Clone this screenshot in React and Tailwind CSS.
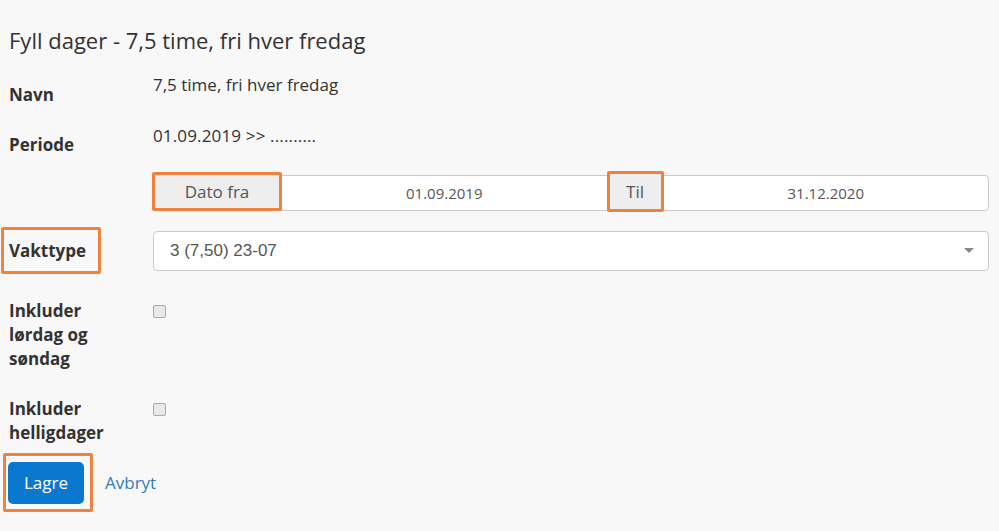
export default function App() {
  const orange = "border-[#f0823f]";
  return (
    <div className="min-h-[531px] w-[999px] bg-[#f8f8f8] pl-[9px] pr-[10px] text-[#333] [font-family:'Open_Sans',sans-serif]">
      <h1 className="pt-[25px] text-[22px] leading-[30px] font-normal text-[#333]">
        Fyll dager - 7,5 time, fri hver fredag
      </h1>

      <div className="mt-[18px] flex">
        <label className="w-[144px] pt-[10px] text-[17px] leading-[24px] font-bold">Navn</label>
        <div className="text-[17px] leading-[24px]">7,5 time, fri hver fredag</div>
      </div>

      <div className="mt-[17px] flex">
        <label className="w-[144px] pt-[9px] text-[17px] leading-[24px] font-bold">Periode</label>
        <div className="text-[17px] leading-[24px] tracking-[0.15px]">01.09.2019 &gt;&gt; ..........</div>
      </div>

      <div className="mt-[18px] flex">
        <div className="w-[144px]" />
        <div className="flex h-[36px] flex-1 rounded-[4px] border border-[#ccc] bg-white text-[15px] text-[#555]">
          <div className={`-mt-[4px] -ml-[2px] flex h-[39px] w-[130px] items-center justify-center rounded-[2px] border-[3px] ${orange} bg-[#eee] text-[17px] text-[#555]`}>
            Dato fra
          </div>
          <div className="flex flex-1 items-center justify-center">01.09.2019</div>
          <div className={`-mt-[5px] flex h-[41px] w-[57px] items-center justify-center rounded-[2px] border-[3px] ${orange} bg-[#eee] text-[17px] text-[#555]`}>
            Til
          </div>
          <div className="flex flex-1 items-center justify-center">31.12.2020</div>
        </div>
      </div>

      <div className="mt-[16px] flex items-center">
        <div className="-ml-[8px] mr-[52px] w-[100px]">
          <div className={`flex h-[47px] items-center rounded-[2px] border-[3px] ${orange} pl-[5px] text-[17px] font-bold`}>
            Vakttype
          </div>
        </div>
        <div className="flex h-[40px] flex-1 items-center justify-between rounded-[4px] border border-[#ccc] bg-white pr-[14px] pl-[16px] text-[17px] text-[#555] [font-family:'Liberation_Sans',Arial,sans-serif]">
          <span>3 (7,50) 23-07</span>
          <svg width="10" height="6" viewBox="0 0 10 6">
            <path d="M0 0 L10 0 L5 5 Z" fill="#888" />
          </svg>
        </div>
      </div>

      <div className="mt-[25px] flex">
        <label className="w-[144px] text-[17px] leading-[24px] font-bold">
          Inkluder
          <br />
          lørdag og
          <br />
          søndag
        </label>
        <div className="pt-[6px]">
          <div className="h-[13px] w-[13px] rounded-[2px] border border-[#aaa] bg-[#e8e8e8]" />
        </div>
      </div>

      <div className="mt-[26px] flex">
        <label className="w-[144px] text-[17px] leading-[24px] font-bold">
          Inkluder
          <br />
          helligdager
        </label>
        <div className="pt-[6px]">
          <div className="h-[13px] w-[13px] rounded-[2px] border border-[#aaa] bg-[#e8e8e8]" />
        </div>
      </div>

      <div className="mt-[8px] flex items-center">
        <div className={`-ml-[6px] rounded-[2px] border-[3px] ${orange} pt-[6px] pr-[6px] pb-[5px] pl-[2px]`}>
          <button className="h-[42px] w-[76px] rounded-[5px] bg-[#0a78cf] text-[17px] text-white">Lagre</button>
        </div>
        <a className="ml-[12px] text-[17px] text-[#2f7bbf]">Avbryt</a>
      </div>
    </div>
  );
}
